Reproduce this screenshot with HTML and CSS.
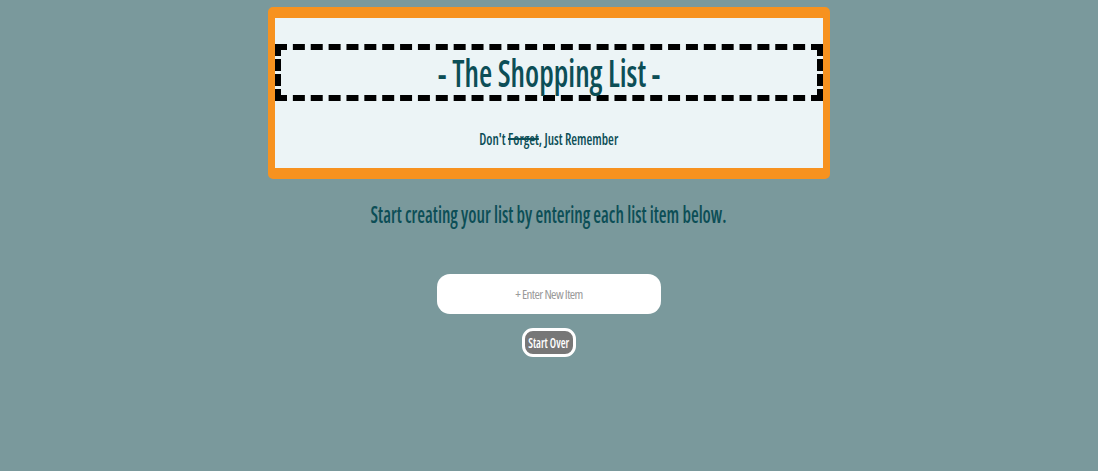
FILE: index.html
```html
<!DOCTYPE html>
<html>
<head>
<meta charset="utf-8">
<link rel="stylesheet" href="styles.css">
</head>
<body>
<div class="page">
  <header class="header">
    <h1 class="title"><span class="narrow">- The Shopping List -</span></h1>
    <p class="tagline"><span class="narrow">Don't <s>Forget</s>, Just Remember</span></p>
  </header>
  <p class="intro"><span class="narrow">Start creating your list by entering each list item below.</span></p>
  <form class="entry">
    <input class="new-item" type="text" placeholder="+ Enter New Item">
    <button class="reset" type="button"><span class="narrow">Start Over</span></button>
  </form>
</div>
</body>
</html>
```
FILE: styles.css
```css
html, body {
  margin: 0;
  padding: 0;
}
body {
  background: #7a999c;
  font-family: "Open Sans", "DejaVu Sans", sans-serif;
  font-stretch: 75%;
  height: 471px;
  overflow: hidden;
}
.page {
  width: 562px;
  margin: 0 auto;
  padding-top: 7px;
  display: flex;
  flex-direction: column;
  align-items: center;
}
.narrow {
  display: inline-block;
  white-space: nowrap;
  transform: scaleX(0.8);
  transform-origin: center;
}
.header {
  box-sizing: border-box;
  width: 562px;
  background: #ecf4f6;
  border-style: solid;
  border-color: #f7921f;
  border-width: 11px 7px;
  border-radius: 5px;
  padding-top: 26px;
  padding-bottom: 17px;
  text-align: center;
}
.title {
  margin: 0;
  box-sizing: border-box;
  height: 57px;
  border: 6px dashed #000;
  font-size: 38px;
  font-weight: 600;
  line-height: 45px;
  color: #0c4e56;
}
.title .narrow {
  transform: scaleX(0.8);
}
.tagline {
  margin: 26px 0 0;
  font-size: 16px;
  font-weight: 600;
  line-height: 24px;
  color: #0c4e56;
}
.tagline .narrow {
  transform: scaleX(0.83);
}
.tagline s {
  text-decoration-thickness: 1.5px;
}
.intro {
  margin: 20px 0 0;
  font-size: 23px;
  font-weight: 600;
  line-height: 30px;
  color: #0c4e56;
}
.intro .narrow {
  transform: scaleX(0.772);
}
.entry {
  margin-top: 45px;
  display: flex;
  flex-direction: column;
  align-items: center;
  gap: 14px;
}
.new-item {
  box-sizing: border-box;
  width: 224px;
  height: 40px;
  border: none;
  border-radius: 13px;
  background: #fff;
  text-align: center;
  font-family: inherit;
  font-stretch: 75%;
  font-size: 13px;
  letter-spacing: -0.6px;
  color: #555;
  outline: none;
}
.new-item::placeholder {
  color: #9a9a9a;
}
.reset {
  box-sizing: border-box;
  width: 54px;
  height: 29px;
  padding: 0;
  border: 3px solid #fff;
  border-radius: 11px;
  background: #777;
  color: #fff;
  font-family: inherit;
  font-stretch: 75%;
  font-size: 14px;
  font-weight: 600;
  display: flex;
  align-items: center;
  justify-content: center;
  overflow: visible;
}
```
